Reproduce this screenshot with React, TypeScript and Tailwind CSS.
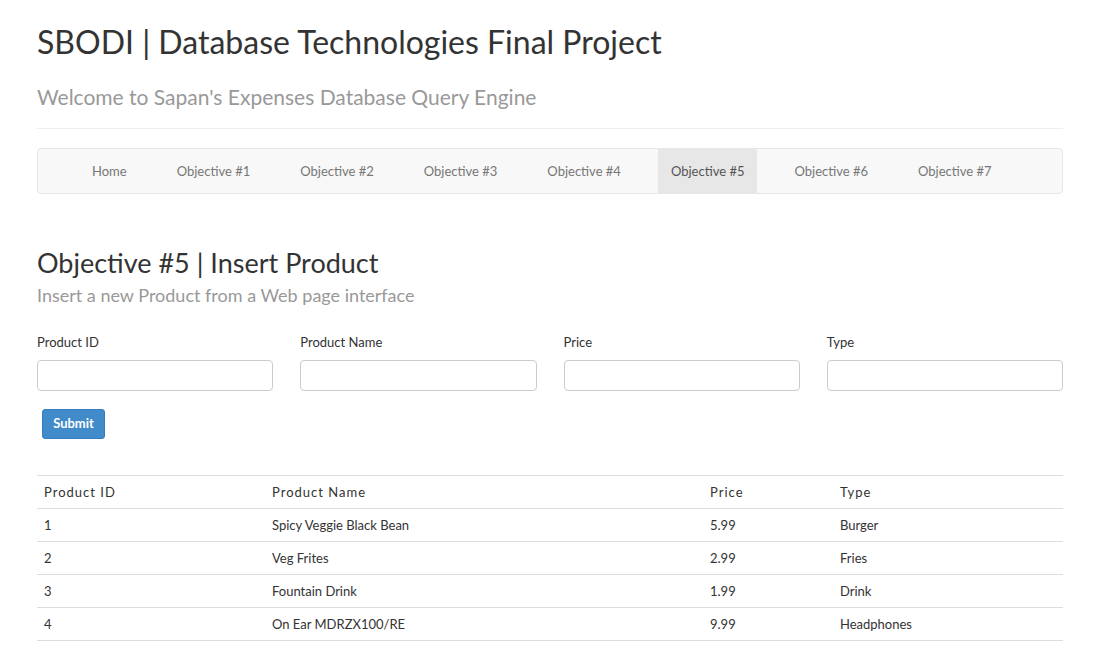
import React from 'react';

const navItems = ['Home', 'Objective #1', 'Objective #2', 'Objective #3', 'Objective #4', 'Objective #5', 'Objective #6', 'Objective #7'];

const fields = ['Product ID', 'Product Name', 'Price', 'Type'];

const products = [
  { id: '1', name: 'Spicy Veggie Black Bean', price: '5.99', type: 'Burger' },
  { id: '2', name: 'Veg Frites', price: '2.99', type: 'Fries' },
  { id: '3', name: 'Fountain Drink', price: '1.99', type: 'Drink' },
  { id: '4', name: 'On Ear MDRZX100/RE', price: '9.99', type: 'Headphones' },
];

export default function App() {
  return (
    <div className="min-h-[645px] bg-white font-['Lato','Liberation_Sans',sans-serif] text-[#333]">
      <div className="w-[1026px] ml-[37px] pt-[22px]">
        <h1 className="text-[32px] leading-[40px] text-[#333]">SBODI | Database Technologies Final Project</h1>
        <h2 className="mt-[23px] text-[21px] leading-[24px] text-[#999]">Welcome to Sapan's Expenses Database Query Engine</h2>
        <hr className="mt-[19px] border-t border-[#eee]" />

        <nav className="mt-[19px] h-[46px] flex items-stretch pl-[41px] bg-[#f8f8f8] border border-[#e7e7e7] rounded-[4px]">
          {navItems.map((item) => (
            <a
              key={item}
              className={`flex items-center pt-[1px] px-[13px] mr-[24px] text-[13px] ${
                item === 'Objective #5' ? 'bg-[#e7e7e7] text-[#555]' : 'text-[#777]'
              }`}
            >
              {item}
            </a>
          ))}
        </nav>

        <h3 className="mt-[53px] text-[27px] leading-[32px] text-[#333]">Objective #5 | Insert Product</h3>
        <p className="mt-[5px] text-[18px] leading-[22px] text-[#999]">Insert a new Product from a Web page interface</p>

        <div className="mt-[27px] grid grid-cols-4 gap-x-[27px]">
          {fields.map((f) => (
            <div key={f} className="flex flex-col">
              <label className="text-[13px] leading-[18px] text-[#333]">{f}</label>
              <input className="mt-[9px] h-[31px] border border-[#ccc] rounded-[4px] px-3 text-[13px] outline-none" />
            </div>
          ))}
        </div>

        <button className="mt-[18px] ml-[5px] w-[63px] h-[30px] bg-[#428bca] border border-[#357ebd] rounded-[3px] text-white text-[13px] font-bold">
          Submit
        </button>

        <table className="mt-[36px] w-full border-collapse text-[13px]">
          <thead>
            <tr className="border-t border-b border-[#ddd] h-[33px]">
              <th className="w-[228px] pl-[7px] pt-[1px] text-left font-normal tracking-[1px]">Product ID</th>
              <th className="w-[438px] pl-[7px] pt-[1px] text-left font-normal tracking-[1px]">Product Name</th>
              <th className="w-[130px] pl-[7px] pt-[1px] text-left font-normal tracking-[1px]">Price</th>
              <th className="pl-[7px] pt-[1px] text-left font-normal tracking-[1px]">Type</th>
            </tr>
          </thead>
          <tbody>
            {products.map((p) => (
              <tr key={p.id} className="border-b border-[#ddd] h-[33px]">
                <td className="pl-[7px] pt-[1px]">{p.id}</td>
                <td className="pl-[7px] pt-[1px]">{p.name}</td>
                <td className="pl-[7px] pt-[1px]">{p.price}</td>
                <td className="pl-[7px] pt-[1px]">{p.type}</td>
              </tr>
            ))}
          </tbody>
        </table>
      </div>
    </div>
  );
}
